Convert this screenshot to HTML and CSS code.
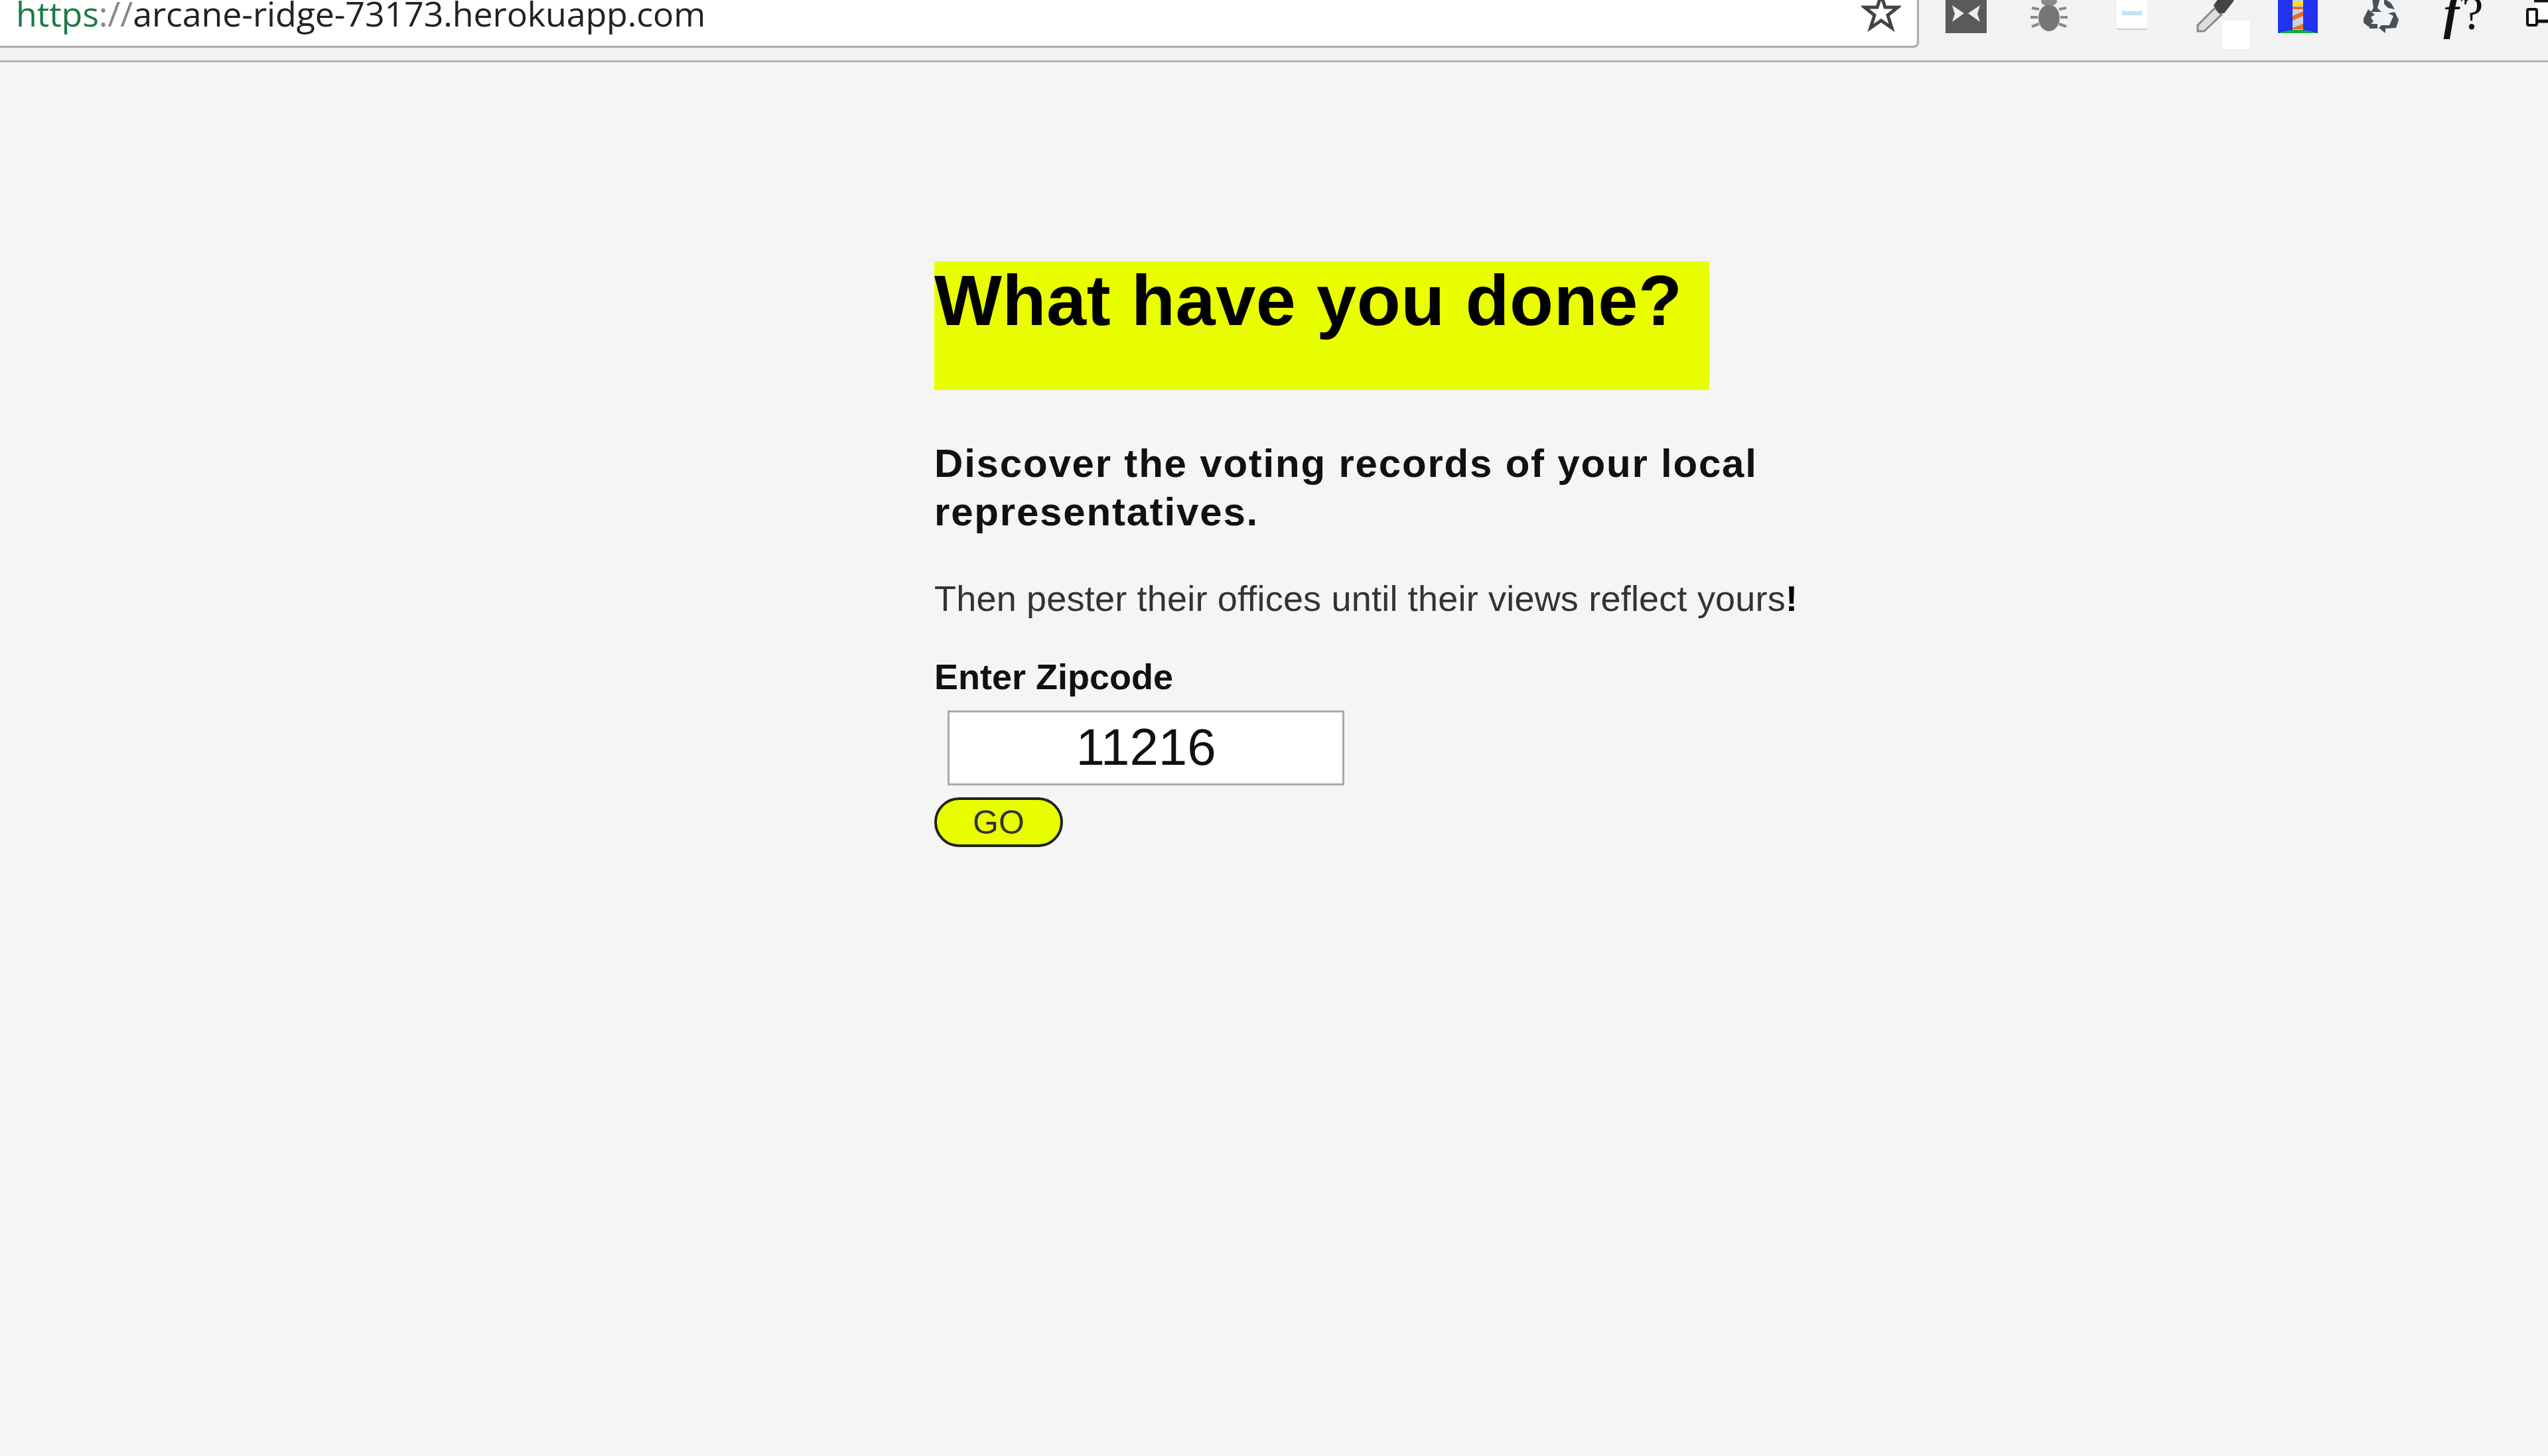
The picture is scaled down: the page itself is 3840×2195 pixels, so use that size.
FILE: index.html
```html
<!DOCTYPE html>
<html lang="en">
<head>
  <meta charset="UTF-8">
  <meta name="viewport" content="width=device-width, initial-scale=1.0">
  <title>What have you done?</title>
  <link rel="stylesheet" href="styles.css">
</head>
<body>
  <div class="toolbar">
    <div class="address">
      <div class="url"><span class="scheme">https</span><span class="slashes">://</span>arcane-ridge-73173.herokuapp.com</div>
      <svg class="star" width="60" height="50" viewBox="0 0 60 50">
        <path d="M30 -7 L36 11 L55 11 L40 23 L46 42 L30 31 L14 42 L20 23 L5 11 L24 11 Z" fill="#fff" stroke="#444" stroke-width="5"/>
      </svg>
    </div>
    <div class="icons">
      <div class="slot">
        <svg width="62" height="50" viewBox="0 0 62 50">
          <rect width="62" height="50" fill="#5a5a5a"/>
          <path d="M10 8 L28 20 L10 33 L14 21 Z M52 8 L34 20 L52 33 L48 21 Z" fill="#eee"/>
        </svg>
      </div>
      <div class="slot">
        <svg width="58" height="50" viewBox="0 0 58 50">
          <g stroke="#8a8a8a" stroke-width="4">
            <path d="M14 14 L3 12 M12 26 L1 26 M14 36 L3 40 M44 14 L55 12 M46 26 L57 26 M44 36 L55 40"/>
          </g>
          <ellipse cx="29" cy="2" rx="12" ry="7" fill="#8a8a8a"/>
          <ellipse cx="29" cy="27" rx="16" ry="20" fill="#777"/>
        </svg>
      </div>
      <div class="slot">
        <svg width="46" height="46" viewBox="0 0 46 46">
          <rect width="46" height="44" fill="#fff"/>
          <rect y="43" width="46" height="2" fill="#ccc"/>
          <rect x="8" y="17" width="30" height="6" fill="#bfe3f7"/>
        </svg>
      </div>
      <div class="slot dropper">
        <svg width="60" height="50" viewBox="0 0 60 50">
          <path d="M4 38 L30 12 L40 22 L14 47 L4 47 Z" fill="#ddd" stroke="#888" stroke-width="3"/>
          <path d="M28 8 L38 -6 L60 -6 L58 2 L44 20 L36 20 Z" fill="#444"/>
        </svg>
        <div class="swatch"></div>
      </div>
      <div class="slot">
        <svg width="60" height="50" viewBox="0 0 60 50">
          <rect width="60" height="50" fill="#2233f0"/>
          <path d="M0 50 Q30 40 60 50 Z" fill="#10b040"/>
          <rect x="22" y="0" width="16" height="45" fill="#c9d3e6"/>
          <rect x="22" y="2" width="16" height="6" fill="#ffe020"/>
          <path d="M22 10 H38 V14 H22 Z M22 24 L38 17 V24 L22 31 Z M22 42 L38 36 V44 H22 Z" fill="#f06a20"/>
        </svg>
      </div>
      <div class="slot">
        <svg width="58" height="50" viewBox="0 0 58 50">
          <g fill="#46525c">
            <path d="M16 -2 L28 -2 L24 12 L30 18 L14 18 L18 12 Z"/>
            <path d="M34 -2 L44 4 L50 14 L40 12 L34 6 Z"/>
            <path d="M3 28 L10 14 L20 22 L14 26 L18 32 L10 40 L3 34 Z"/>
            <path d="M10 36 L24 36 L24 43 L12 43 Z"/>
            <path d="M30 38 L42 38 L48 24 L40 20 L50 18 L56 30 L52 42 L36 43 L36 50 L26 42 Z"/>
          </g>
        </svg>
      </div>
      <div class="slot fhelp"><i>f</i>?</div>
      <div class="slot">
        <svg class="last-icon" width="62" height="50" viewBox="0 0 62 50">
          <path d="M12 1 H58 V32 H18" fill="#fff" stroke="#111" stroke-width="5"/>
          <rect x="2" y="14" width="14" height="24" rx="2" fill="#fff" stroke="#111" stroke-width="4"/>
        </svg>
      </div>
    </div>
  </div>

  <main class="content">
    <h1 class="banner">What have you done?</h1>
    <h2 class="tagline">Discover the voting records of your local representatives.</h2>
    <p class="lead">Then pester their offices until their views reflect yours<b>!</b></p>
    <form class="zip-form" onsubmit="return false">
      <label class="zip-label" for="zip">Enter Zipcode</label>
      <input class="zip-input" id="zip" type="text" value="11216">
      <button class="go" type="submit">GO</button>
    </form>
  </main>
</body>
</html>
```

FILE: styles.css
```css
* {
  margin: 0;
  padding: 0;
  box-sizing: border-box;
}
html, body {
  height: 100%;
}
body {
  background-color: #f5f5f5;
  color: #111;
  font-family: 'Liberation Sans', Arial, sans-serif;
  overflow: hidden;
}
.toolbar {
  display: flex;
  height: 94px;
  background-color: #f2f2f2;
  border-bottom: 3px solid #b4b4b4;
}
.address {
  flex: none;
  display: flex;
  justify-content: space-between;
  width: 2892px;
  height: 72px;
  padding: 0 24px;
  background-color: #fff;
  border: solid #aaa;
  border-width: 0 3px 3px 0;
  border-bottom-right-radius: 8px;
  overflow: hidden;
}
.url {
  font-family: 'Open Sans', sans-serif;
  font-size: 52px;
  line-height: 52px;
  margin-top: -6px;
  letter-spacing: -0.15px;
  color: #222;
  white-space: nowrap;
}
.scheme {
  color: #1d7a48;
}
.slashes {
  color: #888;
}
.icons {
  flex: none;
  display: flex;
  padding-left: 8px;
}
.slot {
  flex: none;
  position: relative;
  display: flex;
  justify-content: center;
  width: 125px;
  height: 50px;
}
.swatch {
  position: absolute;
  left: 74px;
  top: 31px;
  width: 42px;
  height: 43px;
  background-color: #fff;
}
.fhelp {
  font-family: 'Liberation Serif', serif;
  font-size: 72px;
  line-height: 40px;
  color: #111;
}
.fhelp i {
  font-weight: bold;
  margin-right: 4px;
}
.content {
  padding: 300px 0 0 1408px;
}
.banner {
  width: 1168px;
  height: 194px;
  background-color: #e9ff00;
  color: #000;
  font-size: 108px;
  line-height: 118px;
  letter-spacing: 0.6px;
}
.tagline {
  width: 1300px;
  margin-top: 74px;
  font-size: 60px;
  line-height: 73px;
  letter-spacing: 1.8px;
}
.lead {
  margin-top: 61px;
  font-size: 54px;
  line-height: 66px;
  letter-spacing: 0.2px;
  color: #333;
}
.lead b {
  color: #000;
}
.zip-form {
  display: flex;
  flex-direction: column;
  align-items: flex-start;
  margin-top: 52px;
}
.zip-label {
  font-size: 54px;
  font-weight: bold;
  line-height: 66px;
}
.zip-input {
  width: 598px;
  height: 113px;
  margin: 18px 0 0 20px;
  border: 3px solid #aaa;
  padding-bottom: 2px;
  background: #fff;
  font-family: inherit;
  font-size: 78px;
  text-align: center;
  color: #111;
}
.go {
  width: 194px;
  height: 75px;
  margin-top: 18px;
  border: 4px solid #222;
  border-radius: 38px;
  background-color: #e9ff00;
  font-family: inherit;
  font-size: 50px;
  color: #333;
}
```
